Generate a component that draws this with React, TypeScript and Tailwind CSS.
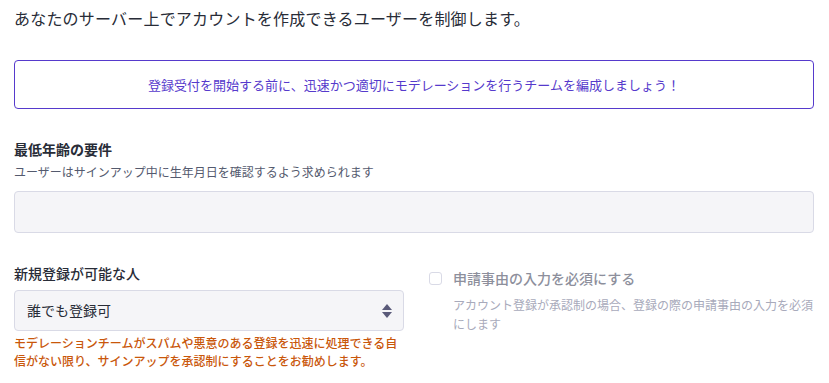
import React from 'react';

const font = { fontFamily: '"Noto Sans CJK JP", "Noto Sans", sans-serif' };

export default function App() {
  return (
    <div className="w-[829px] h-[383px] bg-white px-[14px] pt-[5px] text-[#282c37] overflow-hidden" style={font}>
      <p className="text-[16px] leading-[26px] tracking-[0.2px]">あなたのサーバー上でアカウントを作成できるユーザーを制御します。</p>

      <div className="mt-[29px] mr-[1px] h-[49px] rounded-[4px] border border-[#563acc] flex items-center justify-center text-[13px] text-[#563acc]">
        登録受付を開始する前に、迅速かつ適切にモデレーションを行うチームを編成しましょう！
      </div>

      <div className="mt-[30px]">
        <div className="text-[14px] font-bold leading-[20px]">最低年齢の要件</div>
        <div className="mt-[5px] text-[12px] leading-[16px] text-[#545a6e]">ユーザーはサインアップ中に生年月日を確認するよう求められます</div>
        <div className="mt-[11px] mr-[1px] h-[42px] rounded-[4px] border border-[#d9dae6] bg-[#f5f5f8]" />
      </div>

      <div className="mt-[30px] flex gap-[25px]">
        <div className="w-[390px] shrink-0">
          <div className="text-[14px] leading-[20px] font-medium">新規登録が可能な人</div>
          <div className="mt-[7px] h-[41px] rounded-[4px] border border-[#d9dae6] bg-[#f5f5f8] flex items-center justify-between pl-[12px] pr-[10px]">
            <span className="text-[14px] text-[#282c37]">誰でも登録可</span>
            <svg width="12" height="16" viewBox="0 0 12 16" fill="#5a5a7a">
              <path d="M6 1 L11 7 H1 Z" />
              <path d="M6 15 L11 9 H1 Z" />
            </svg>
          </div>
          <p className="mt-[3px] text-[12px] leading-[18px] text-[#c9570b] font-medium">
            モデレーションチームがスパムや悪意のある登録を迅速に処理できる自信がない限り、サインアップを承認制にすることをお勧めします。
          </p>
        </div>

        <div className="flex-1 pt-[5px]">
          <div className="flex items-center gap-[11px]">
            <span className="w-[13px] h-[13px] rounded-[3px] border border-[#d9dae6] bg-white" />
            <span className="text-[14px] leading-[20px] text-[#8d8f9c] font-medium">申請事由の入力を必須にする</span>
          </div>
          <p className="mt-[7px] pl-[24px] text-[12px] leading-[19px] text-[#a8aabb]">
            アカウント登録が承認制の場合、登録の際の申請事由の入力を必須にします
          </p>
        </div>
      </div>
    </div>
  );
}
